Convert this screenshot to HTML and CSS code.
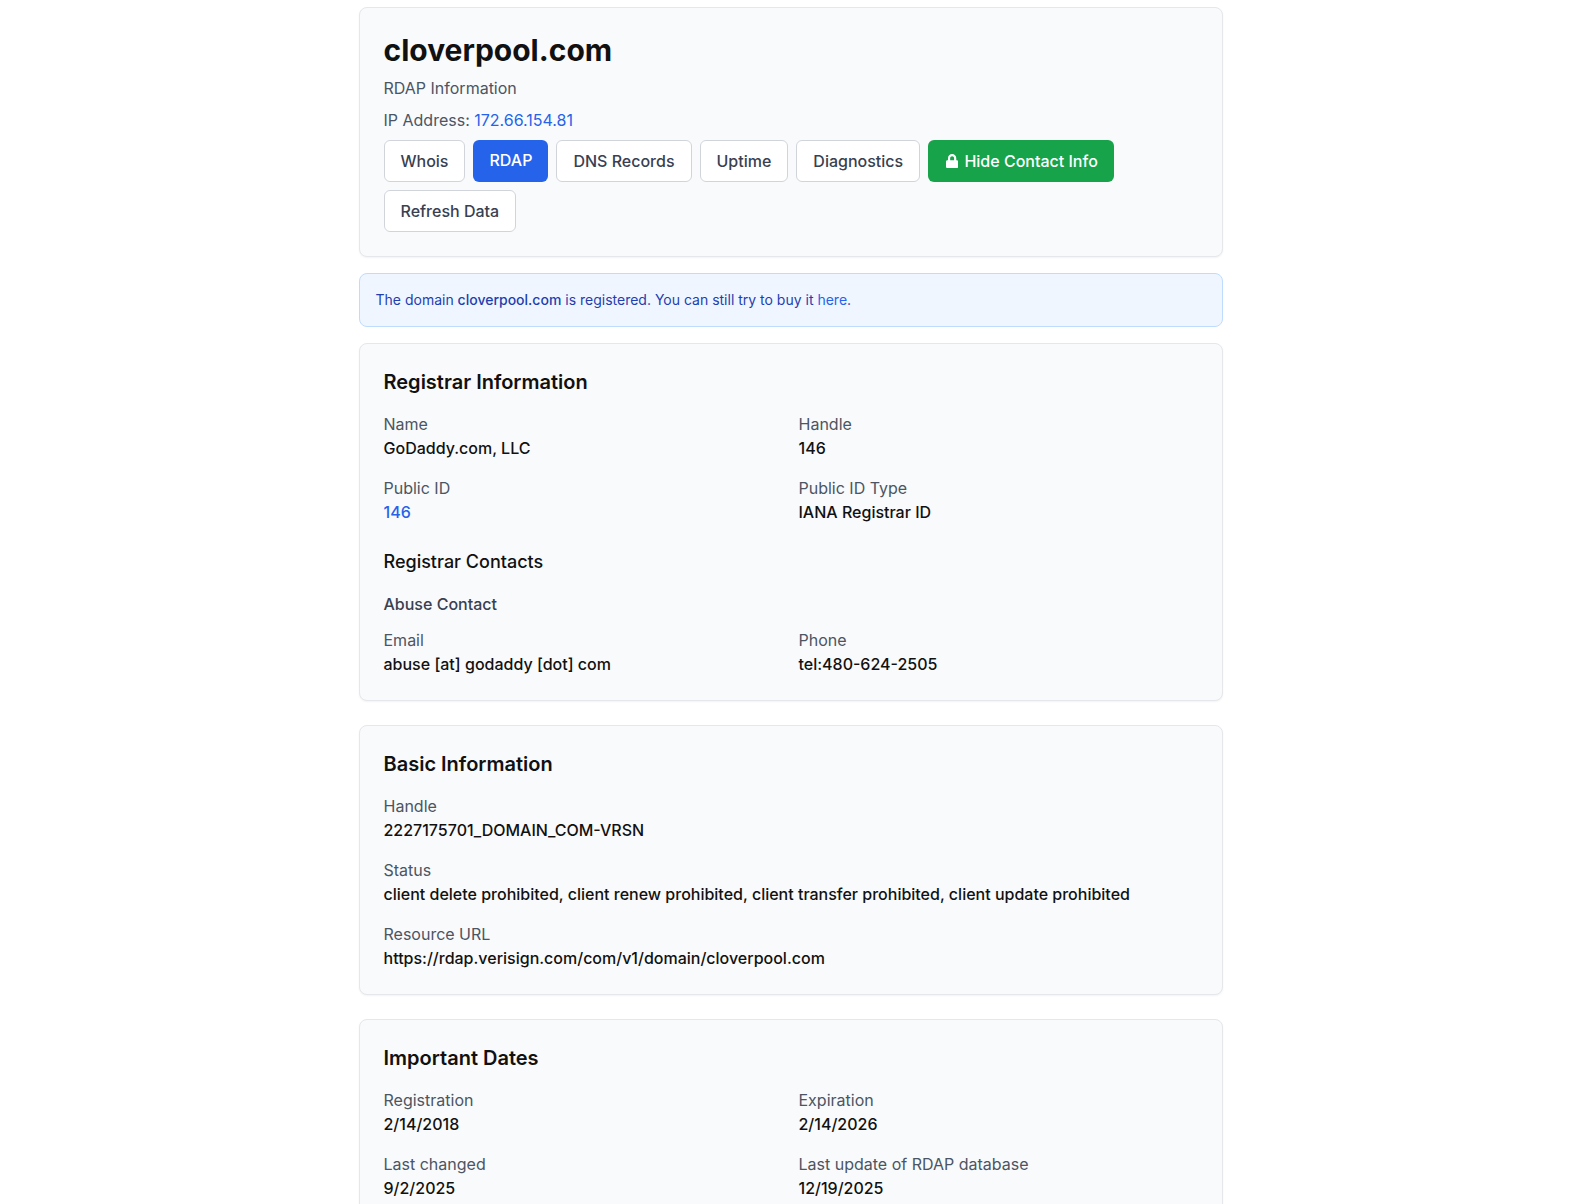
FILE: index.html
```html
<!DOCTYPE html>
<html>
<head>
    <link rel="stylesheet" href="styles.css">
</head>
<body>
    <div class="container">
        <div class="card header-card">
            <h1>cloverpool.com</h1>
            <p class="subtitle">RDAP Information</p>
            <p class="ip-line">IP Address: <a href="#">172.66.154.81</a></p>
            <div class="button-row">
                <a class="btn" href="#">Whois</a>
                <a class="btn btn-active" href="#">RDAP</a>
                <a class="btn" href="#">DNS Records</a>
                <a class="btn" href="#">Uptime</a>
                <a class="btn" href="#">Diagnostics</a>
                <button class="btn btn-green">
                    <span class="lock-box"><svg class="lock-icon" viewBox="0 0 448 512"><path d="M400 224h-24v-72C376 68.200 307.800 0 224 0S72 68.200 72 152v72H48c-26.500 0-48 21.500-48 48v192c0 26.500 21.500 48 48 48h352c26.500 0 48-21.500 48-48V272c0-26.500-21.500-48-48-48zm-104 0H152v-72c0-39.700 32.300-72 72-72s72 32.300 72 72v72z"/></svg></span>
                    Hide Contact Info
                </button>
                <button class="btn">Refresh Data</button>
            </div>
        </div>

        <div class="alert">
            The domain <a class="alert-domain" href="#">cloverpool.com</a> is registered. You can still try to buy it <a class="alert-link" href="#">here</a>.
        </div>

        <div class="card section-card">
            <h2>Registrar Information</h2>
            <div class="field-grid">
                <div class="field">
                    <div class="field-label">Name</div>
                    <div class="field-value">GoDaddy.com, LLC</div>
                </div>
                <div class="field">
                    <div class="field-label">Handle</div>
                    <div class="field-value">146</div>
                </div>
                <div class="field">
                    <div class="field-label">Public ID</div>
                    <div class="field-value"><a href="#">146</a></div>
                </div>
                <div class="field">
                    <div class="field-label">Public ID Type</div>
                    <div class="field-value">IANA Registrar ID</div>
                </div>
            </div>
            <h3>Registrar Contacts</h3>
            <h4>Abuse Contact</h4>
            <div class="field-grid">
                <div class="field">
                    <div class="field-label">Email</div>
                    <div class="field-value">abuse [at] godaddy [dot] com</div>
                </div>
                <div class="field">
                    <div class="field-label">Phone</div>
                    <div class="field-value">tel:480-624-2505</div>
                </div>
            </div>
        </div>

        <div class="card section-card">
            <h2>Basic Information</h2>
            <div class="field-stack">
                <div class="field">
                    <div class="field-label">Handle</div>
                    <div class="field-value">2227175701_DOMAIN_COM-VRSN</div>
                </div>
                <div class="field">
                    <div class="field-label">Status</div>
                    <div class="field-value">client delete prohibited, client renew prohibited, client transfer prohibited, client update prohibited</div>
                </div>
                <div class="field">
                    <div class="field-label">Resource URL</div>
                    <div class="field-value">https://rdap.verisign.com/com/v1/domain/cloverpool.com</div>
                </div>
            </div>
        </div>

        <div class="card section-card">
            <h2>Important Dates</h2>
            <div class="field-grid">
                <div class="field">
                    <div class="field-label">Registration</div>
                    <div class="field-value">2/14/2018</div>
                </div>
                <div class="field">
                    <div class="field-label">Expiration</div>
                    <div class="field-value">2/14/2026</div>
                </div>
                <div class="field">
                    <div class="field-label">Last changed</div>
                    <div class="field-value">9/2/2025</div>
                </div>
                <div class="field">
                    <div class="field-label">Last update of RDAP database</div>
                    <div class="field-value">12/19/2025</div>
                </div>
            </div>
        </div>
    </div>
</body>
</html>
```

FILE: styles.css
```css
body {
    margin: 0;
    background-color: rgb(255, 255, 255);
    color: rgb(17, 17, 17);
    font-family: Inter, "Liberation Sans", sans-serif;
    font-size: 16px;
    line-height: 24px;
}
a {
    text-decoration: none;
}
.container {
    width: 864px;
    margin-left: 358.5px;
    padding-top: 7px;
}
.card {
    background-color: rgb(249, 250, 251);
    border: 1px solid rgb(229, 231, 235);
    border-radius: 8px;
    box-shadow: 0 1px 2px rgba(0, 0, 0, 0.05);
    padding: 24px;
}
.header-card {
    margin-bottom: 16px;
}
.section-card {
    margin-bottom: 24px;
}
h1 {
    margin: 0;
    font-size: 30px;
    line-height: 36px;
    font-weight: 700;
}
.subtitle {
    margin: 8px 0 0;
    color: rgb(75, 85, 99);
}
.ip-line {
    margin: 8px 0 0;
    color: rgb(75, 85, 99);
}
.ip-line a,
.field-value a {
    color: rgb(37, 99, 235);
}
.button-row {
    display: flex;
    flex-wrap: wrap;
    gap: 8px;
    margin-top: 8px;
}
.btn {
    display: block;
    padding: 8px 16px;
    background-color: rgb(255, 255, 255);
    border: 1px solid rgb(209, 213, 219);
    border-radius: 6px;
    color: rgb(55, 65, 81);
    font-family: inherit;
    font-size: 16px;
    line-height: 24px;
    font-weight: 500;
}
.btn-active {
    background-color: rgb(37, 99, 235);
    border: 0;
    color: rgb(255, 255, 255);
}
.btn-green {
    background-color: rgb(22, 163, 74);
    border: 0;
    color: rgb(255, 255, 255);
    padding: 9px 16px;
}
.lock-box {
    display: inline-block;
    width: 16px;
    text-align: center;
}
.lock-icon {
    width: 12.25px;
    height: 14px;
    fill: rgb(255, 255, 255);
    vertical-align: -1px;
}
.alert {
    margin-bottom: 16px;
    padding: 16px;
    background-color: rgb(239, 246, 255);
    border: 1px solid rgb(191, 219, 254);
    border-radius: 8px;
    color: rgb(30, 64, 175);
    font-size: 14px;
    line-height: 20px;
}
.alert-domain {
    color: rgb(30, 64, 175);
    font-weight: 500;
}
.alert-link {
    color: rgb(37, 99, 235);
}
h2 {
    margin: 0 0 16px;
    font-size: 20px;
    line-height: 28px;
    font-weight: 600;
}
h3 {
    margin: 24px 0 16px;
    font-size: 18px;
    line-height: 28px;
    font-weight: 500;
}
h4 {
    margin: 0 0 12px;
    font-size: 16px;
    line-height: 24px;
    font-weight: 500;
    color: rgb(55, 65, 81);
}
.field-grid {
    display: grid;
    grid-template-columns: 1fr 1fr;
    gap: 16px;
}
.field-stack {
    display: flex;
    flex-direction: column;
    gap: 16px;
}
.field-label {
    color: rgb(75, 85, 99);
}
.field-value {
    font-weight: 500;
}
```
